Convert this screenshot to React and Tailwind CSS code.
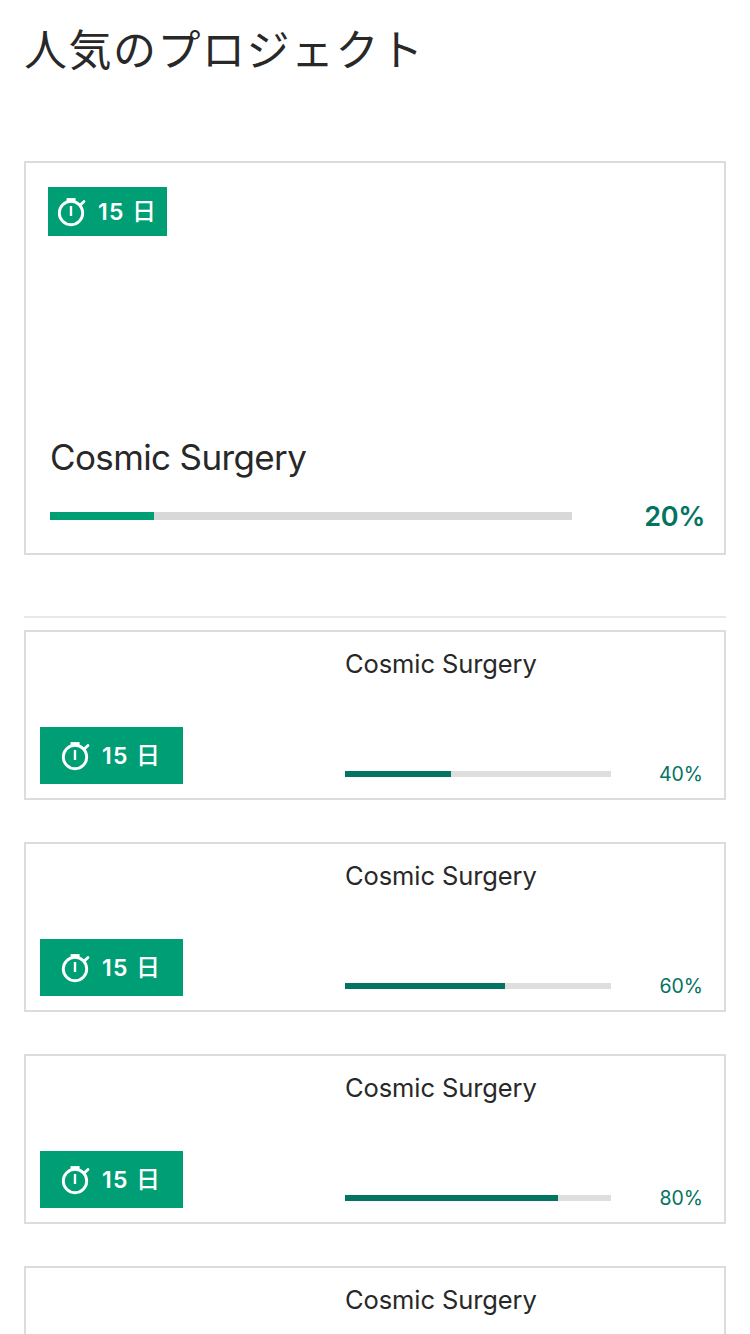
import React from 'react';

function Stopwatch() {
  return (
    <svg className="h-8 w-8 shrink-0" viewBox="0 0 32 32" fill="none" stroke="white">
      <circle cx="16" cy="17" r="11.7" strokeWidth="2.9" />
      <path d="M11.6 3.7h9" strokeWidth="3.2" />
      <path d="M25 9.2l4-3.8" strokeWidth="2.8" strokeLinecap="round" />
      <path d="M16 10v10" strokeWidth="2.4" />
    </svg>
  );
}

function DaysLeft({ large }) {
  return (
    <div
      className={
        large
          ? 'flex h-[49px] w-[119px] items-center bg-[#009e74] pl-[7px] text-white'
          : 'flex h-[57px] w-[143px] items-center bg-[#009e74] pl-[19px] text-white'
      }
    >
      <Stopwatch />
      <span className="ml-[11px] w-[27px] pt-px text-[23px] leading-none font-semibold tracking-[1.2px] whitespace-nowrap">
        15
      </span>
      <span className="ml-[7px] text-2xl leading-none font-medium">日</span>
    </div>
  );
}

function Featured() {
  return (
    <article className="flex h-[394px] flex-col border-2 border-[#dcdcdc] pt-6">
      <div className="pl-[22px]">
        <DaysLeft large />
      </div>
      <h2 className="mt-[199px] ml-6 text-[35px] leading-[44px] tracking-[-0.63px] whitespace-nowrap text-[#282828]">
        Cosmic Surgery
      </h2>
      <div className="mt-[17px] flex h-[40px] items-center justify-between pr-[19px] pl-6">
        <div className="h-2 w-[522px] bg-[#d8d8d8]">
          <div className="h-full w-1/5 bg-[#009e74]" />
        </div>
        <span className="text-[27px] leading-none font-semibold tracking-[-0.3px] text-[#037362]">20%</span>
      </div>
    </article>
  );
}

function ProjectRow({ percent }) {
  return (
    <article className="flex h-[170px] shrink-0 border-2 border-[#dcdcdc]">
      <div className="flex w-[319px] items-end pb-[14px] pl-[14px]">
        <DaysLeft />
      </div>
      <div className="flex flex-1 flex-col justify-between pt-4 pb-[14px]">
        <h3 className="text-[25.5px] leading-[32px] tracking-[-0.1px] whitespace-nowrap text-[#282828]">
          Cosmic Surgery
        </h3>
        <div className="flex h-5 items-center justify-between pr-[21px]">
          <div className="h-1.5 w-[266px] bg-[#dedede]">
            <div className="h-full bg-[#037362]" style={{ width: `${percent}%` }} />
          </div>
          <span className="pt-px text-[19.5px] leading-none text-[#037362]">{percent}%</span>
        </div>
      </div>
    </article>
  );
}

export default function App() {
  return (
    <main className="h-[1334px] w-[750px] overflow-hidden bg-white px-6 font-[Inter,'Noto_Sans_CJK_JP',sans-serif]">
      <h1 className="h-[161px] pt-[15px] font-['Noto_Sans_CJK_JP',sans-serif] text-[43px] leading-[64px] tracking-[1.5px] whitespace-nowrap text-[#282828]">
        人気のプロジェクト
      </h1>
      <Featured />
      <hr className="mt-[61px] mb-3 border-t-2 border-[#e8e8e8]" />
      <section className="flex flex-col gap-[42px]">
        {[40, 60, 80, 90].map((p) => (
          <ProjectRow key={p} percent={p} />
        ))}
      </section>
    </main>
  );
}
